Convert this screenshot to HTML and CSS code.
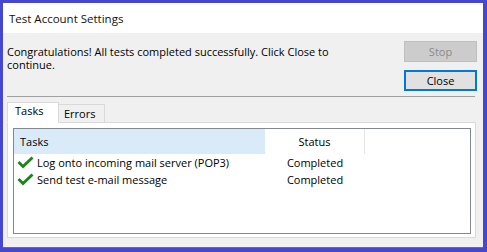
FILE: index.html
```html
<!DOCTYPE html>
<html>
<head>
<meta charset="utf-8">
<link rel="stylesheet" href="styles.css">
</head>
<body>
<div class="window">
  <div class="titlebar">Test Account Settings</div>
  <div class="content">
    <div class="top">
      <div class="message">Congratulations! All tests completed successfully. Click Close to continue.</div>
      <div class="buttons">
        <div class="btn btn-disabled">Stop</div>
        <div class="btn btn-default">Close</div>
      </div>
    </div>
    <div class="separator"></div>
    <div class="tabs">
      <div class="tab tab-active">Tasks</div>
      <div class="tab">Errors</div>
    </div>
    <div class="panel">
      <div class="listbox">
        <div class="header">
          <div class="col-task hcell hover">Tasks</div>
          <div class="col-status hcell center">Status</div>
        </div>
        <div class="row">
          <div class="col-task cell">
            <svg class="check" width="17" height="13" viewBox="0 0 17 13"><path d="M0.5,7 L2.5,5 L6,8.5 L14.5,0.5 L16.5,2.5 L6,12.5 Z" fill="#1a861a"/></svg>
            <span>Log onto incoming mail server (POP3)</span>
          </div>
          <div class="col-status cell center">Completed</div>
        </div>
        <div class="row">
          <div class="col-task cell">
            <svg class="check" width="17" height="13" viewBox="0 0 17 13"><path d="M0.5,7 L2.5,5 L6,8.5 L14.5,0.5 L16.5,2.5 L6,12.5 Z" fill="#1a861a"/></svg>
            <span>Send test e-mail message</span>
          </div>
          <div class="col-status cell center">Completed</div>
        </div>
      </div>
    </div>
  </div>
</div>
</body>
</html>
```

FILE: styles.css
```css
* { box-sizing: border-box; }
html, body { margin: 0; padding: 0; }
body {
  width: 487px;
  height: 252px;
  background: #4547cf;
  padding: 3px 4px 0 3px;
  font-family: "Open Sans", "Noto Sans", sans-serif;
  font-size: 11px;
  color: #000;
  overflow: hidden;
}
.window {
  width: 480px;
  height: 245px;
  background: #f0f0f0;
  border-bottom: 1px solid #1a86e0;
  display: flex;
  flex-direction: column;
}
.titlebar {
  height: 30px;
  background: #fff;
  padding-left: 6px;
  display: flex;
  align-items: center;
  font-size: 11.5px;
  color: #111;
}
.content {
  flex: 1;
  padding: 8px 6px 0 4px;
}
.top {
  display: flex;
  justify-content: space-between;
}
.message {
  width: 340px;
  padding-top: 4px;
  line-height: 13px;
}
.buttons {
  display: flex;
  flex-direction: column;
  gap: 8px;
}
.btn {
  width: 73px;
  height: 21px;
  display: flex;
  align-items: center;
  justify-content: center;
}
.btn-disabled {
  background: #cccccc;
  border: 1px solid #bfbfbf;
  color: #8a8a8a;
}
.btn-default {
  background: #e1e1e1;
  border: 2px solid #0078d7;
}
.separator {
  margin-top: 5px;
  height: 1px;
  width: 468px;
  background: #a0a0a0;
}
.tabs {
  margin-top: 4px;
  display: flex;
  align-items: flex-end;
  height: 21px;
  position: relative;
  z-index: 1;
}
.tab {
  height: 18px;
  padding: 0 9px 0 5px;
  border: 1px solid #d9d9d9;
  border-bottom: none;
  background: #f0f0f0;
  display: flex;
  align-items: center;
  margin-left: -1px;
}
.tab-active {
  height: 21px;
  margin-left: 0;
  background: #fff;
  width: 52px;
  padding: 0 0 4px 7px;
  border-bottom: 1px solid #fff;
  margin-bottom: -1px;
}
.panel {
  width: 469px;
  height: 116px;
  background: #fff;
  border: 1px solid #d9d9d9;
  padding: 5px 4px 3px 5px;
}
.listbox {
  height: 106px;
  border: 1px solid #828790;
  background: #fff;
}
.header {
  display: flex;
  height: 25px;
}
.hcell {
  display: flex;
  align-items: center;
}
.hover {
  background: #d9ebf9;
  padding-left: 6px;
}
.col-task { width: 251px; }
.col-status { width: 100px; }
.header .col-status { border-right: 1px solid #e5e5e5; }
.center { justify-content: center; }
.row {
  display: flex;
  height: 17px;
}
.cell {
  display: flex;
  align-items: center;
}
.row .col-task { padding-left: 3px; }
.check { margin-right: 3px; flex: none; }
```
